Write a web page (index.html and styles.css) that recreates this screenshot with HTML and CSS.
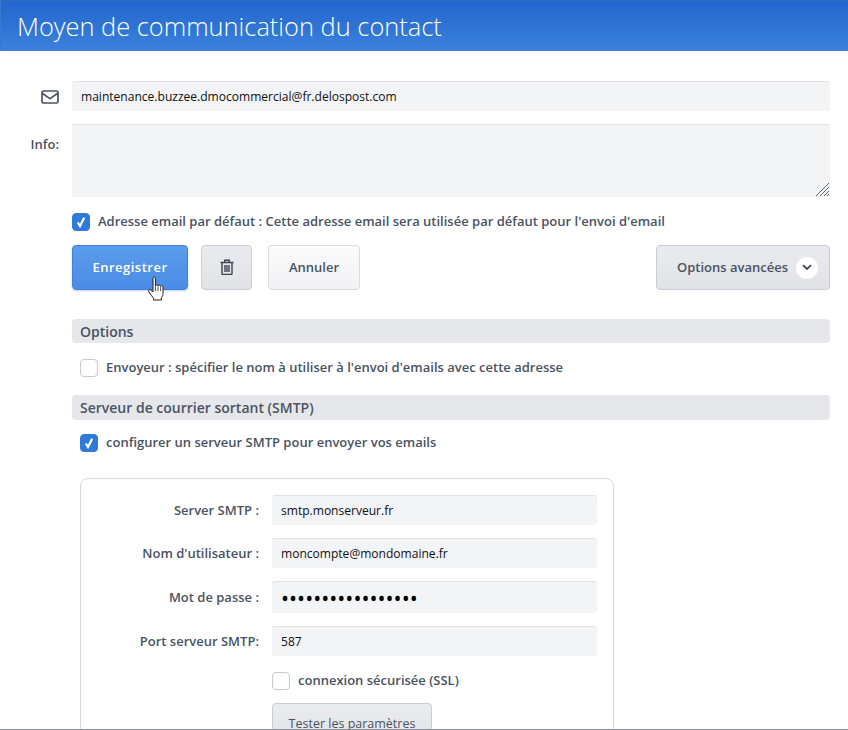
FILE: index.html
```html
<!DOCTYPE html>
<html lang="fr">
<head>
<meta charset="utf-8">
<title>Moyen de communication du contact</title>
<link rel="stylesheet" href="styles.css">
</head>
<body>
<div class="window">
  <header class="header"><h1>Moyen de communication du contact</h1></header>
  <main class="content">
    <div class="row row-email">
      <div class="label-col">
        <svg class="mail-icon" width="18" height="14" viewBox="0 0 18 14" fill="none" stroke="#4a5361" stroke-width="1.7"><rect x="1" y="1" width="16" height="12" rx="1.6"/><path d="M1.2 3.2 9 8.6l7.8-5.4" stroke-linejoin="round"/></svg>
      </div>
      <div class="field field-wide">maintenance.buzzee.dmocommercial@fr.delospost.com</div>
    </div>
    <div class="row row-info">
      <div class="label-col label-text">Info:</div>
      <div class="field field-area">
        <svg class="resize" width="14" height="14" viewBox="0 0 14 14" stroke="#666b73" stroke-width="1"><path d="M1 14 14 1M5 14l9-9M9 14l5-5M12 14l2-2"/></svg>
      </div>
    </div>
    <label class="check check-default">
      <span class="box on"><svg width="12" height="12" viewBox="0 0 12 12" fill="none" stroke="#fff" stroke-width="2.2"><path d="M2.8 6.5 5 10 9.2 1.8"/></svg></span>
      <span class="check-text">Adresse email par défaut : Cette adresse email sera utilisée par défaut pour l'envoi d'email</span>
    </label>
    <div class="actions">
      <button class="btn btn-primary" type="button">Enregistrer
        <svg class="cursor" width="20" height="26" viewBox="0 0 20 26"><path d="M6 2.2c0-1.5 2.4-1.5 2.4 0v7.6c.3-1.5 2.5-1.4 2.6.2.3-1.3 2.5-1.2 2.6.4.4-1 2.4-.8 2.4.8v6c0 2-.6 3.3-1.6 4.6V24H6.5v-1.8c-1.4-1.6-3-4-4.6-6.3-1.2-1.8.7-3.1 2-1.8L6 16Z" fill="#fff" stroke="#222" stroke-width="1" stroke-linejoin="round"/><path d="M8.4 10v5M11 10.4V15M13.6 11v4" stroke="#222" stroke-width=".8" fill="none"/></svg>
      </button>
      <button class="btn btn-grey btn-trash" type="button" aria-label="Supprimer">
        <svg width="14" height="16" viewBox="0 0 14 16" fill="none" stroke="#3e4551" stroke-width="1.4"><path d="M.5 3.5h13M4.7 3.2V1.2h4.6v2M2 3.5v11c0 .5.4.9.9.9h8.2c.5 0 .9-.4.9-.9v-11"/><path d="M5 6v7M7 6v7M9 6v7"/></svg>
      </button>
      <button class="btn btn-light" type="button">Annuler</button>
      <button class="btn btn-grey btn-adv" type="button">Options avancées
        <span class="chev"><svg width="10" height="7" viewBox="0 0 10 7" fill="none" stroke="#3e4551" stroke-width="1.8"><path d="M1 1.2 5 5l4-3.8"/></svg></span>
      </button>
    </div>
    <h2 class="section section-options">Options</h2>
    <label class="check check-sender">
      <span class="box"></span>
      <span class="check-text">Envoyeur : spécifier le nom à utiliser à l'envoi d'emails avec cette adresse</span>
    </label>
    <h2 class="section section-smtp">Serveur de courrier sortant (SMTP)</h2>
    <label class="check check-smtp">
      <span class="box on"><svg width="12" height="12" viewBox="0 0 12 12" fill="none" stroke="#fff" stroke-width="2.2"><path d="M2.8 6.5 5 10 9.2 1.8"/></svg></span>
      <span class="check-text">configurer un serveur SMTP pour envoyer vos emails</span>
    </label>
    <section class="card">
      <div class="card-row r1"><span class="card-label">Server SMTP :</span><div class="field">smtp.monserveur.fr</div></div>
      <div class="card-row r2"><span class="card-label">Nom d'utilisateur :</span><div class="field">moncompte@mondomaine.fr</div></div>
      <div class="card-row r3"><span class="card-label">Mot de passe :</span><div class="field dots">•••••••••••••••••</div></div>
      <div class="card-row r4"><span class="card-label">Port serveur SMTP:</span><div class="field">587</div></div>
      <label class="check check-ssl"><span class="box"></span><span class="check-text">connexion sécurisée (SSL)</span></label>
      <button class="btn btn-grey btn-test" type="button">Tester les paramètres</button>
    </section>
  </main>
</div>
</body>
</html>
```

FILE: styles.css
```css
* { box-sizing: border-box; }
html, body { margin: 0; height: 100%; background: #fff; }
body { overflow: hidden; font-family: "Open Sans", "Noto Sans", sans-serif; font-size: 13px; color: #4a5361; }
.window { height: 730px; overflow: hidden; border-bottom: 1px solid #8b8f96; }
.header { height: 51px; padding: 0 17px; display: flex; align-items: center; background: linear-gradient(#2366cd, #3a81dc); border-top: 1px solid #2f6cbf; border-left: 1px solid #3a78cf; }
.header h1 { margin: 0 0 0 -1px; font-weight: 300; font-size: 25.42px; color: #fff; white-space: nowrap; }
.content { padding: 30px 18px 0 0; }
.row { display: flex; }
.label-col { width: 72px; padding-right: 13px; display: flex; justify-content: flex-end; flex: none; }
.label-text { font-weight: 600; padding-top: 11px; line-height: 18px; }
.mail-icon { margin-top: 9px; }
.field { background: #f3f4f6; border-top: 1px solid #dfe1e5; border-radius: 3px; color: #111; font-size: 12.05px; padding-left: 9px; display: flex; align-items: center; }
.field-wide { flex: 1; height: 30px; }
.row-info { margin-top: 13px; }
.field-area { flex: 1; height: 73px; position: relative; border-radius: 0; }
.resize { position: absolute; right: 1px; bottom: 1px; }
.check { display: flex; align-items: center; gap: 8px; font-weight: 600; font-size: 13px; color: #4a5361; }
.check-text { padding-bottom: 2px; }
.box { width: 18px; height: 18px; border: 1px solid #c6cad1; border-radius: 4px; background: #fff; flex: none; display: flex; align-items: center; justify-content: center; }
.box.on { background: #2f7bdc; border-color: #2f7bdc; }
.check-default { margin: 16px 0 0 72px; height: 18px; }
.actions { display: flex; margin: 14px 0 0 72px; height: 45px; }
.btn { font-family: inherit; font-weight: 600; font-size: 13px; border-radius: 4px; color: #4a5361; height: 45px; padding: 0 0 2px; position: relative; }
.btn-primary { width: 116px; color: #fff; background: linear-gradient(#5c9cec, #4a8ce6); border: 1px solid #3f80d8; letter-spacing: .5px; box-shadow: 0 1px 2px rgba(60,90,140,.3); }
.btn-grey { background: linear-gradient(#e9ebee, #e1e3e7); border: 1px solid #c9ccd6; }
.btn-light { background: linear-gradient(#fbfbfc, #f1f2f4); border: 1px solid #d9dbe0; width: 92px; margin-left: 16px; }
.btn-trash { width: 51px; margin-left: 13px; padding-top: 4px; }
.btn-adv { margin-left: auto; width: 174px; display: flex; align-items: center; justify-content: flex-end; gap: 8px; padding-right: 11px; }
.chev { width: 22px; height: 22px; border-radius: 50%; background: #fff; display: flex; align-items: center; justify-content: center; margin-top: 2px; }
.cursor { position: absolute; left: 74px; top: 30px; }
.section { margin: 0 0 0 72px; background: #e5e7ea; border-radius: 4px; font-size: 14px; font-weight: 600; color: #4a5361; padding-left: 8px; display: flex; align-items: center; }
.section-options { height: 24px; margin-top: 29px; }
.section-smtp { height: 25px; margin-top: 18px; }
.check-sender { margin: 16px 0 0 80px; height: 18px; }
.check-smtp { margin: 13px 0 0 80px; height: 19px; }
.card { margin: 26px 0 0 80px; width: 534px; height: 300px; border: 1px solid #d5d8dd; border-radius: 8px; padding: 16px 16px 0 0; }
.card-row { display: flex; align-items: center; gap: 13px; }
.card-label { width: 178px; text-align: right; font-weight: 600; font-size: 13px; flex: none; }
.card-row .field { width: 325px; height: 30px; }
.r2, .r3, .r4 { margin-top: 13px; }
.r3 .field { height: 32px; }
.card-row .dots { font-size: 21.4px; color: #000; }
.check-ssl { margin: 16px 0 0 191px; height: 18px; }
.btn-test { margin: 13px 0 0 191px; width: 160px; height: 40px; padding: 0; font-size: 12.5px; font-weight: 500; display: block; }
```
